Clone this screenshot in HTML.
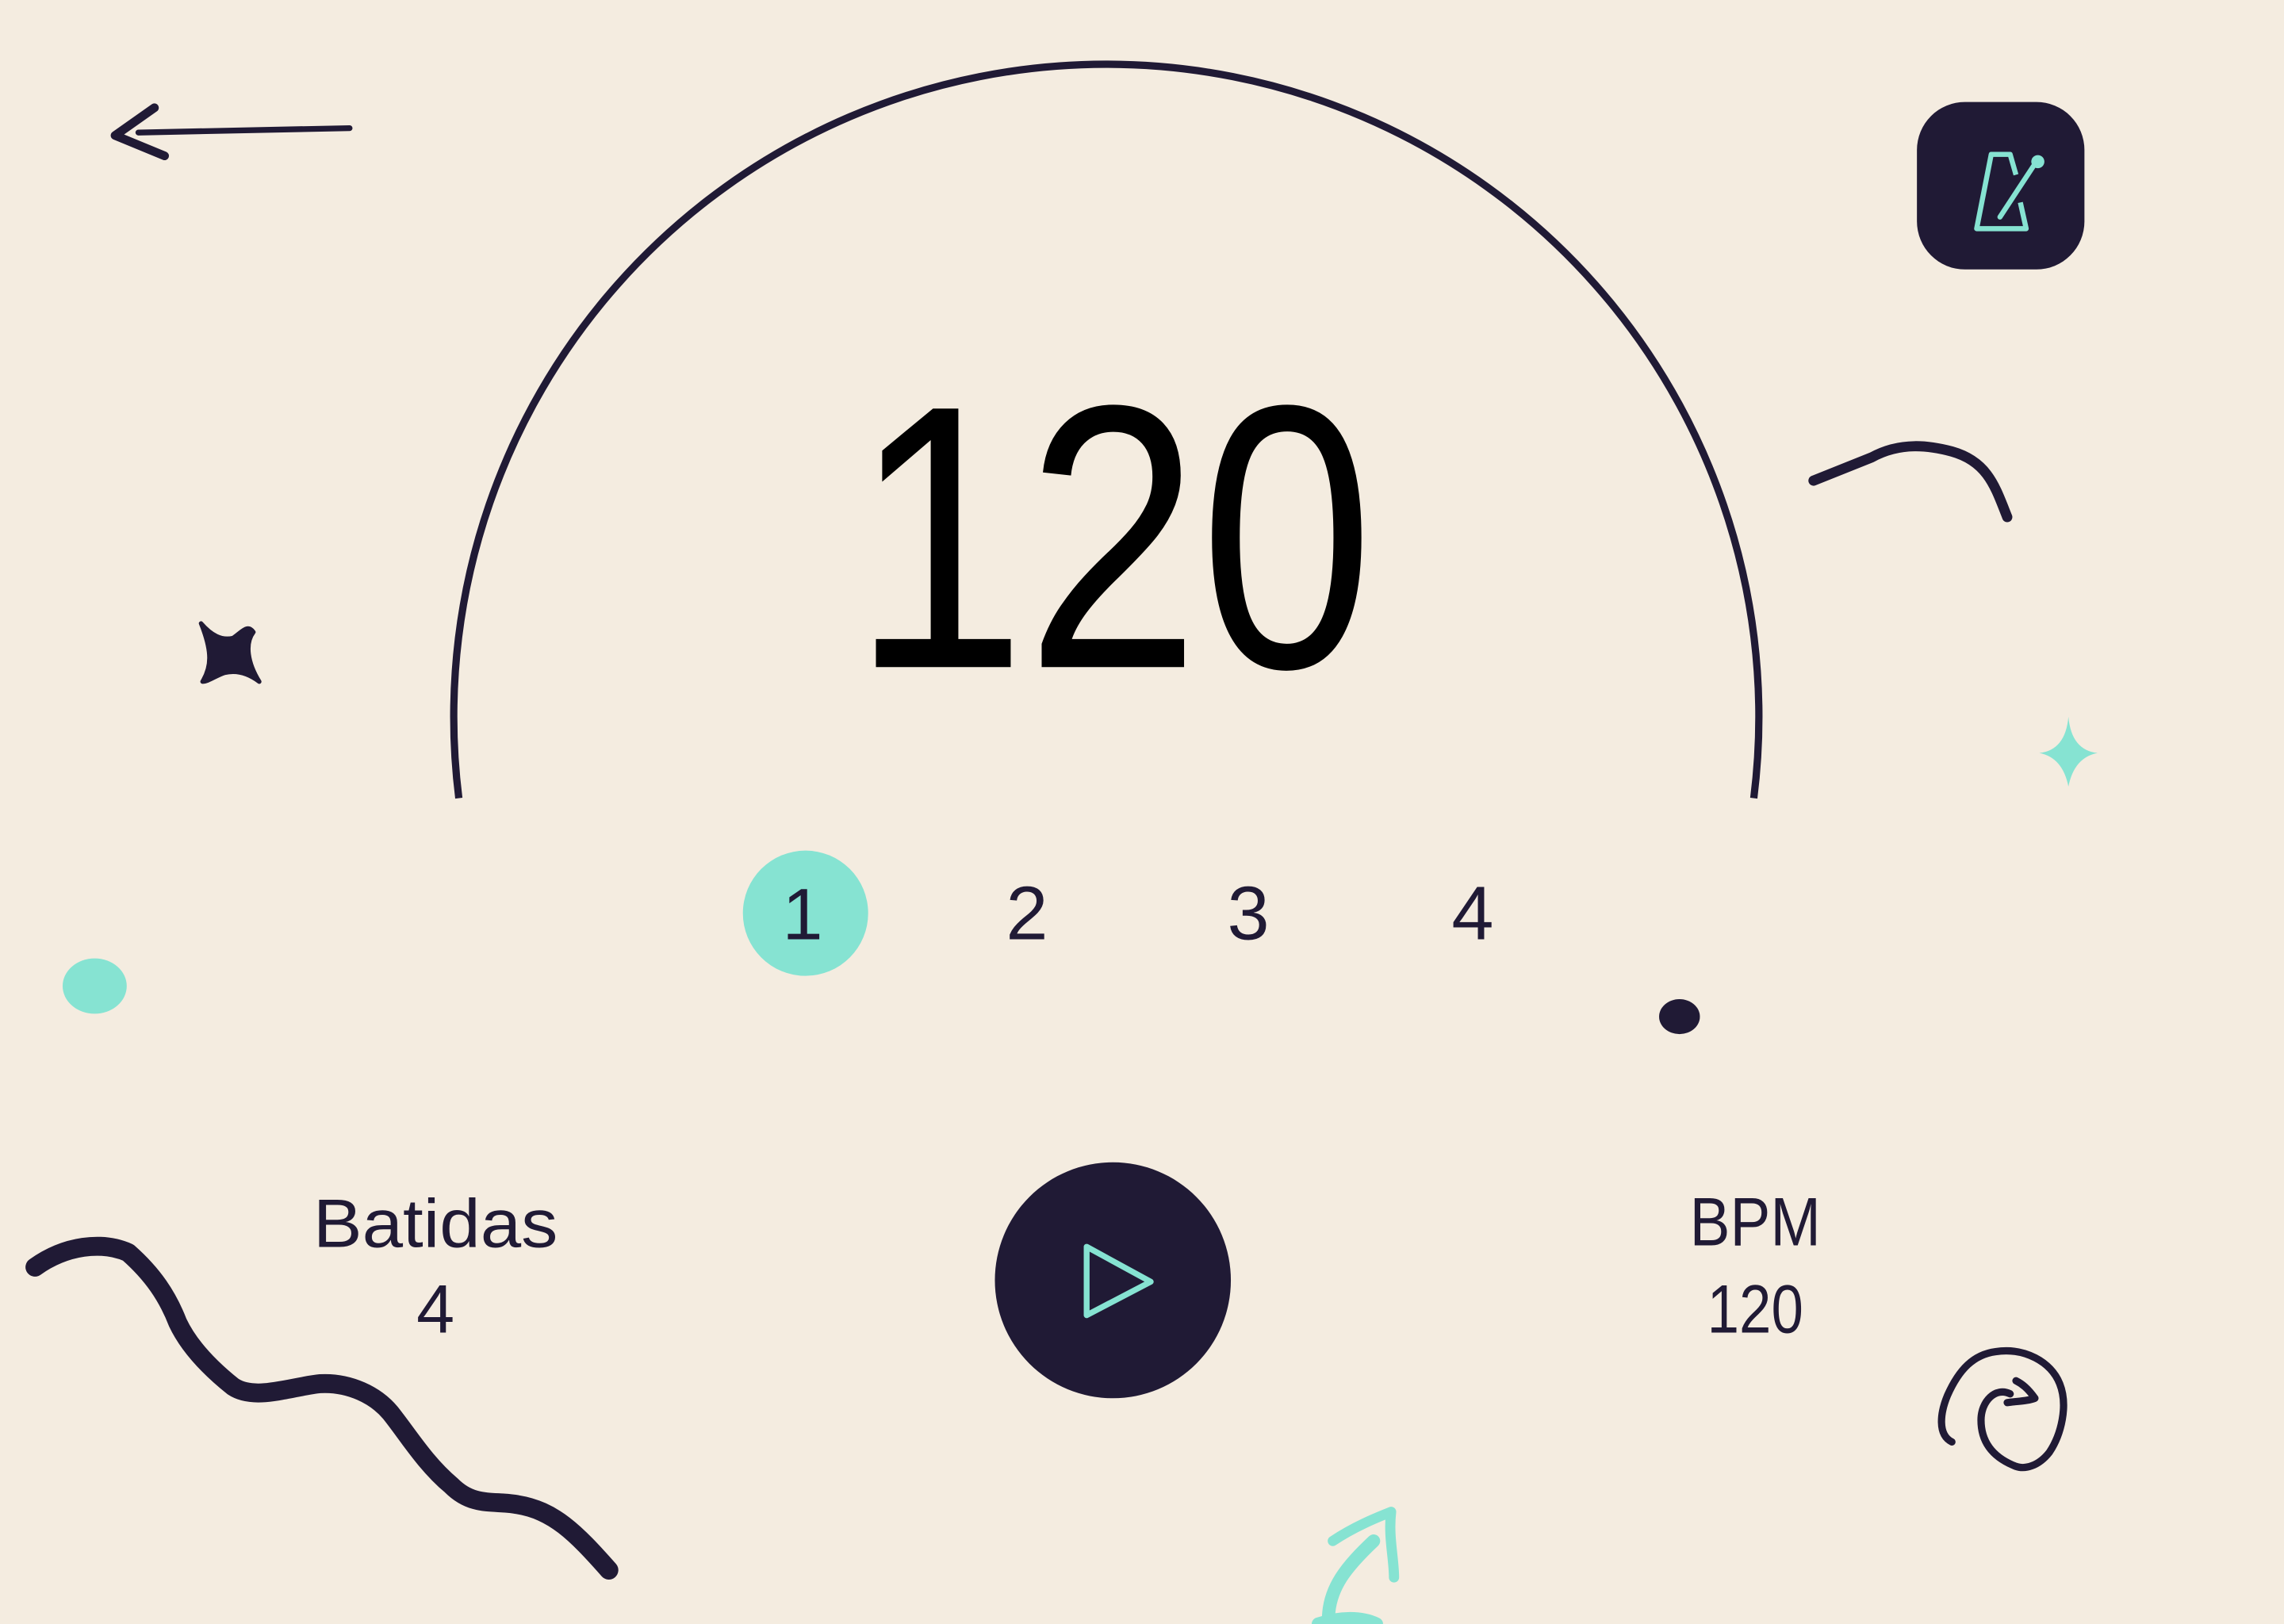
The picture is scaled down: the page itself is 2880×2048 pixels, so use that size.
<!DOCTYPE html>
<html><head><meta charset="utf-8"><style>
html,body{margin:0;padding:0;background:#f4ece0;}
svg{display:block;}
text{font-family:"Liberation Sans",sans-serif;}
</style></head><body>
<svg width="2880" height="2048" viewBox="0 0 1568 1115" preserveAspectRatio="none" xmlns="http://www.w3.org/2000/svg">
<rect width="1568" height="1115" fill="#f4ece0"/>
<path d="M315,548 A448,448 0 1 1 1204,548" fill="none" stroke="#201a35" stroke-width="5"/>
<text x="764" y="458" font-size="258" text-anchor="middle" fill="#000" textLength="358" lengthAdjust="spacingAndGlyphs">120</text>
<circle cx="553" cy="627" r="43" fill="#86e3d2"/>
<g font-size="52" fill="#201a35" text-anchor="middle">
<text x="551" y="645" font-size="50">1</text>
<text x="705" y="645">2</text>
<text x="857" y="645">3</text>
<text x="1011" y="645">4</text>
</g>
<g fill="#201a35" text-anchor="middle" font-size="47">
<text x="299" y="856" textLength="168" lengthAdjust="spacingAndGlyphs">Batidas</text>
<text x="299" y="915">4</text>
<text x="1205" y="855" textLength="90" lengthAdjust="spacingAndGlyphs">BPM</text>
<text x="1205" y="915" textLength="66" lengthAdjust="spacingAndGlyphs">120</text>
</g>
<circle cx="764" cy="879" r="81" fill="#201a35"/>
<path d="M746,856 L790,880 L746,903 Z" fill="none" stroke="#86e3d2" stroke-width="4" stroke-linejoin="round"/>
<rect x="1316" y="70" width="115" height="115" rx="33" fill="#201a35"/>
<path d="M1384,120 L1380,106 L1367,106 L1357,157 L1391,157 L1387,139" fill="none" stroke="#86e3d2" stroke-width="3.5" stroke-linejoin="round"/>
<path d="M1373,149 L1396,114" stroke="#86e3d2" stroke-width="3.5" stroke-linecap="round"/>
<circle cx="1399" cy="111" r="4.5" fill="#86e3d2"/>
<g fill="none" stroke="#201a35" stroke-linecap="round" stroke-linejoin="round">
<path d="M95,91 L240,88" stroke-width="4"/>
<path d="M106,74 L79,93 L113,107" stroke-width="6"/>
<path d="M24,870 C45,855 70,852 88,860 C105,875 115,890 122,908 C130,925 145,940 160,952 C175,962 200,952 220,950 C240,949 258,958 268,970 C280,985 292,1005 310,1020 C325,1035 340,1030 355,1033 C380,1037 395,1052 418,1078" stroke-width="13"/>
<path d="M1245,330 C1265,322 1275,318 1285,314 C1305,303 1325,306 1340,310 C1365,317 1370,335 1378,355" stroke-width="7"/>
<path d="M1340,990 C1330,985 1332,970 1337,958 C1345,940 1355,930 1370,928 C1390,925 1408,935 1414,950 C1420,965 1415,985 1407,997 C1400,1006 1390,1010 1382,1006 C1368,1000 1360,990 1360,975 C1360,962 1370,952 1380,957 M1378,963 C1385,962 1392,962 1397,960 C1392,953 1388,950 1384,948" stroke-width="5"/>
</g>
<g fill="none" stroke="#86e3d2" stroke-linecap="round" stroke-linejoin="round">
<path d="M912,1112 C912,1090 925,1075 943,1058" stroke-width="9"/>
<path d="M915,1058 C930,1048 945,1042 955,1038 C953,1055 957,1070 957,1083" stroke-width="7"/>
<path d="M905,1115 C920,1110 935,1110 945,1115" stroke-width="9"/>
</g>
<path d="M138,428 C145,436 152,440 160,438 C166,434 170,428 174,434 C168,442 170,455 178,468 C170,462 162,460 154,462 C148,464 143,468 139,468 C145,458 146,448 138,428 Z" fill="#201a35" stroke="#201a35" stroke-width="3" stroke-linejoin="round"/>
<path d="M1420,492 Q1422,515 1440,517 Q1424,520 1420,540 Q1416,520 1400,517 Q1418,515 1420,492 Z" fill="#86e3d2"/>
<ellipse cx="65" cy="677" rx="22" ry="19" fill="#86e3d2"/>
<ellipse cx="1153" cy="698" rx="14" ry="12" fill="#201a35"/>
</svg>
</body></html>
